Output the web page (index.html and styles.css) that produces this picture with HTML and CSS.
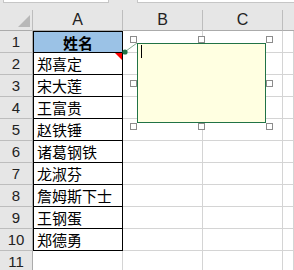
FILE: index.html
```html
<!DOCTYPE html>
<html lang="zh">
<head>
    <meta charset="UTF-8">
    <title>姓名表</title>
    <link rel="stylesheet" href="styles.css">
</head>
<body>
    <div class="topbar">
        <div class="box box-name"></div>
        <div class="box box-formula"></div>
    </div>

    <div class="sheet">
        <div class="hd corner"><span class="select-all"></span></div>
        <div class="hd col">A</div>
        <div class="hd col">B</div>
        <div class="hd col">C</div>
        <div class="hd col last"></div>

        <div class="hd row">1</div><div class="cell a head">姓名</div><div class="cell"></div><div class="cell"></div><div class="cell"></div>
        <div class="hd row">2</div><div class="cell a note">郑喜定</div><div class="cell"></div><div class="cell"></div><div class="cell"></div>
        <div class="hd row">3</div><div class="cell a">宋大莲</div><div class="cell"></div><div class="cell"></div><div class="cell"></div>
        <div class="hd row">4</div><div class="cell a">王富贵</div><div class="cell"></div><div class="cell"></div><div class="cell"></div>
        <div class="hd row">5</div><div class="cell a">赵铁锤</div><div class="cell"></div><div class="cell"></div><div class="cell"></div>
        <div class="hd row">6</div><div class="cell a">诸葛钢铁</div><div class="cell"></div><div class="cell"></div><div class="cell"></div>
        <div class="hd row">7</div><div class="cell a">龙淑芬</div><div class="cell"></div><div class="cell"></div><div class="cell"></div>
        <div class="hd row">8</div><div class="cell a">詹姆斯下士</div><div class="cell"></div><div class="cell"></div><div class="cell"></div>
        <div class="hd row">9</div><div class="cell a">王钢蛋</div><div class="cell"></div><div class="cell"></div><div class="cell"></div>
        <div class="hd row">10</div><div class="cell a">郑德勇</div><div class="cell"></div><div class="cell"></div><div class="cell"></div>
        <div class="hd row">11</div><div class="cell"></div><div class="cell"></div><div class="cell"></div><div class="cell"></div>
    </div>

    <!-- comment being edited, drawn over the grid -->
    <svg class="leader" width="294" height="270">
        <line x1="137" y1="43" x2="126" y2="51" stroke="#7fa98d" stroke-width="1"/>
        <circle cx="125" cy="52" r="2.6" fill="#217346"/>
    </svg>
    <div class="comment">
        <span class="caret"></span>
    </div>
    <span class="handle" style="left:130px;top:36px"></span>
    <span class="handle" style="left:198px;top:36px"></span>
    <span class="handle" style="left:266px;top:36px"></span>
    <span class="handle" style="left:130px;top:80px"></span>
    <span class="handle" style="left:266px;top:80px"></span>
    <span class="handle" style="left:130px;top:123px"></span>
    <span class="handle" style="left:198px;top:123px"></span>
    <span class="handle" style="left:266px;top:123px"></span>
</body>
</html>
```

FILE: styles.css
```css
html, body {
    margin: 0;
    padding: 0;
    width: 294px;
    height: 270px;
    overflow: hidden;
    background: #ffffff;
    position: relative;
    font-family: "Liberation Sans", "Noto Sans CJK SC", sans-serif;
}
.topbar {
    height: 10px;
    background: #e6e6e6;
    display: flex;
    align-items: flex-start;
}
.box {
    height: 2px;
    background: #ffffff;
    border: 1px solid #c6c6c6;
    border-top: none;
}
.box-name {
    margin-left: 3px;
    width: 104px;
}
.box-formula {
    margin-left: 28px;
    flex: 1;
    border-right: none;
}
.sheet {
    display: grid;
    grid-template-columns: 33px 90px 80px 80px 1fr;
    grid-template-rows: 21px repeat(11, 22px);
}
.sheet > div {
    box-sizing: border-box;
}
.hd {
    background: #e6e6e6;
    color: #222;
    display: flex;
    align-items: center;
    justify-content: center;
    font-size: 16px;
}
.hd.col {
    border-right: 1px solid #bdbdbd;
    border-bottom: 1px solid #ababab;
}
.hd.col.last {
    border-right: none;
}
.hd.corner {
    border-right: 1px solid #bdbdbd;
    border-bottom: 1px solid #ababab;
    align-items: flex-end;
    justify-content: flex-end;
    padding: 0 2px 3px 0;
}
.select-all {
    width: 0;
    height: 0;
    border-left: 12px solid transparent;
    border-bottom: 12px solid #b8b8b8;
}
.hd.row {
    border-right: 1px solid #ababab;
    border-bottom: 1px solid #bdbdbd;
    font-size: 15px;
}
.cell {
    border-right: 1px solid #d4d4d4;
    border-bottom: 1px solid #d4d4d4;
    font-family: "Noto Sans CJK SC", sans-serif;
    font-size: 15px;
    color: #000;
    display: flex;
    align-items: center;
    padding-left: 3px;
    white-space: nowrap;
    position: relative;
}
.cell.a {
    border-left: 1px solid #000;
    border-right: 1px solid #000;
    border-bottom: 1px solid #000;
    padding-left: 3px;
}
.cell.head {
    border-top: 1px solid #000;
    background: #9bc2e6;
    font-weight: bold;
    justify-content: center;
    padding-left: 0;
}
.cell.note::after {
    content: "";
    position: absolute;
    top: 0;
    right: 0;
    width: 0;
    height: 0;
    border-left: 7px solid transparent;
    border-top: 7px solid #ff0000;
}
.leader {
    position: absolute;
    left: 0;
    top: 0;
}
.comment {
    position: absolute;
    left: 137px;
    top: 43px;
    width: 129px;
    height: 80px;
    box-sizing: border-box;
    background: #ffffe1;
    border: 1px solid #217346;
}
.caret {
    position: absolute;
    left: 3px;
    top: 1px;
    width: 1px;
    height: 13px;
    background: #000;
}
.handle {
    position: absolute;
    width: 7px;
    height: 7px;
    box-sizing: border-box;
    background: #ffffff;
    border: 1px solid #8c8c8c;
}
```
